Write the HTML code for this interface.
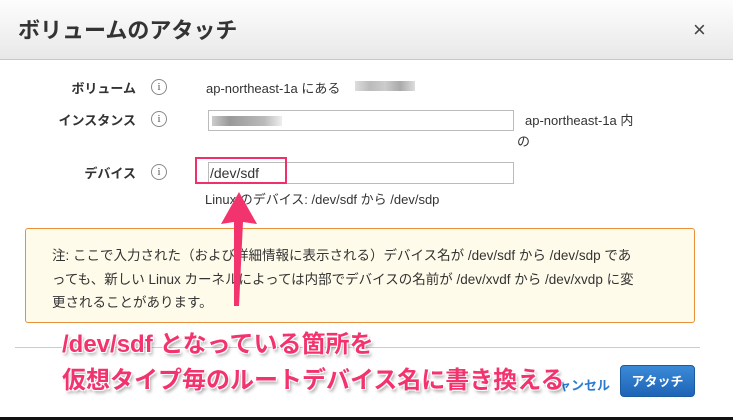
<!DOCTYPE html>
<html><head><meta charset="utf-8"><style>
body{margin:0;width:733px;height:420px;overflow:hidden;background:#fff;font-family:"Liberation Sans","Noto Sans CJK JP",sans-serif;position:relative;color:#333}
.hdr{position:absolute;left:0;top:0;width:733px;height:59px;background:linear-gradient(#fdfdfd,#e8e8e8);border-bottom:1px solid #c8c8c8}
.title{position:absolute;left:18px;top:13px;font-size:22px;font-weight:bold;color:#333}
.x{position:absolute;left:693px;top:17px;font-size:22px;color:#444}
.lbl{position:absolute;font-size:13px;font-weight:bold;color:#333;text-align:right;width:120px;left:16px}
.i{position:absolute;left:151px;width:14px;height:14px;border:1px solid #888;border-radius:50%;font-size:11px;text-align:center;line-height:14px;color:#555;font-family:"Liberation Serif",serif}
.t{position:absolute;font-size:13px;color:#333}
.inp{position:absolute;left:208px;width:305px;height:20px;border:1px solid #bbb;background:#fff;box-sizing:border-box}
.note{position:absolute;left:25px;top:228px;width:670px;height:95px;box-sizing:border-box;border:1px solid #e8913a;border-radius:3px;background:#fffbea;padding:15px 26px;font-size:13.5px;line-height:23.5px;color:#333;white-space:nowrap}
.ann{position:absolute;font-size:24px;font-weight:bold;color:#f2336e;text-shadow:-1px -1px 0 #fff,1px -1px 0 #fff,-1px 1px 0 #fff,1px 1px 0 #fff,2px 3px 3px rgba(0,0,0,.35);white-space:nowrap}
.btn{position:absolute;left:620px;top:365px;width:75px;height:32px;border-radius:4px;background:linear-gradient(#3a8ad8,#1f64b6);border:1px solid #1a5aa0;color:#fff;font-size:13px;font-weight:bold;text-align:center;line-height:31px;box-sizing:border-box}
.blur{position:absolute;height:10px}
</style></head><body>
<div class="hdr"><div class="title">ボリュームのアタッチ</div><div class="x">×</div></div>
<div class="lbl" style="top:78px">ボリューム</div><div class="i" style="top:79px">i</div>
<div class="t" style="left:206px;top:78px">ap-northeast-1a にある</div>
<div class="blur" style="left:355px;top:81px;width:60px;background:linear-gradient(90deg,#ddd,#bbb,#ccc,#aaa,#ddd)"></div>
<div class="lbl" style="top:110px">インスタンス</div><div class="i" style="top:111px">i</div>
<div class="inp" style="top:110px;height:21px;left:208px;width:306px"></div>
<div class="blur" style="left:212px;top:116px;width:70px;background:linear-gradient(90deg,#ccc,#999,#aaa,#bbb,#eee)"></div>
<div class="t" style="left:525px;top:110px">ap-northeast-1a 内</div>
<div class="t" style="left:517px;top:131px">の</div>
<div class="lbl" style="top:163px">デバイス</div><div class="i" style="top:164px">i</div>
<div class="inp" style="top:162px;left:208px;width:306px;height:22px"></div>
<div class="t" style="left:210px;top:165px;font-size:14px">/dev/sdf</div>
<div style="position:absolute;left:195px;top:157px;width:92px;height:27px;border:2px solid #f0306a;box-sizing:border-box"></div>
<div class="t" style="left:205px;top:189px">Linux のデバイス: /dev/sdf から /dev/sdp</div>
<div class="note">注: ここで入力された（および詳細情報に表示される）デバイス名が /dev/sdf から /dev/sdp であ<br>っても、新しい Linux カーネルによっては内部でデバイスの名前が /dev/xvdf から /dev/xvdp に変<br>更されることがあります。</div>
<svg style="position:absolute;left:0;top:0" width="733" height="420"><path d="M239 192 L257 224 L243 222 L239 306 L234 306 L234 222 L221 224 Z" fill="#f2336e"/></svg>
<div style="position:absolute;left:15px;top:347px;width:685px;height:1px;background:#ccc"></div>
<div class="t" style="left:545px;top:375px;color:#2a7bd0;font-weight:bold">キャンセル</div>
<div class="btn">アタッチ</div>
<div class="ann" style="left:62px;top:324px">/dev/sdf となっている箇所を</div>
<div class="ann" style="left:62px;top:360px">仮想タイプ毎のルートデバイス名に書き換える</div>
<div style="position:absolute;left:0;top:417px;width:733px;height:3px;background:#111"></div>
</body></html>
